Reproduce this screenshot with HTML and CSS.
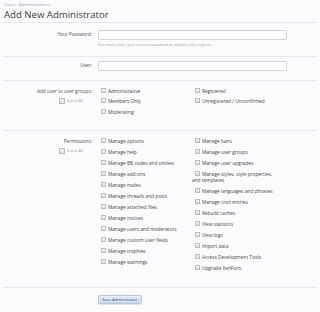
FILE: index.html
```html
<!DOCTYPE html>
<html lang="en">
<head>
<meta charset="utf-8">
<title>Add New Administrator</title>
<link rel="stylesheet" href="styles.css">
</head>
<body>
<div class="page">
  <div class="crumbs"><span>Users</span> <span class="sep">&rsaquo;</span> <span>Administrators</span> <span class="sep">&rsaquo;</span></div>
  <h1 class="title">Add New Administrator</h1>
  <form class="form">
    <div class="row row-pass">
      <div class="label label-input">Your Password:</div>
      <div class="ctrl">
        <div class="input"></div>
        <p class="hint">You must enter your current password to validate this request.</p>
      </div>
    </div>
    <div class="row row-user">
      <div class="label label-input">User:</div>
      <div class="ctrl">
        <div class="input"></div>
      </div>
    </div>
    <div class="row row-groups">
      <div class="label">
        <span>Add user to user groups:</span>
        <span class="selall"><span class="cb"></span>Select All</span>
      </div>
      <div class="cols cols-groups">
        <ul class="list">
          <li><span class="cb"></span>Administrative</li>
          <li><span class="cb"></span>Members Only</li>
          <li><span class="cb"></span>Moderating</li>
        </ul>
        <ul class="list">
          <li><span class="cb"></span>Registered</li>
          <li><span class="cb"></span>Unregistered / Unconfirmed</li>
        </ul>
      </div>
    </div>
    <div class="row row-perms">
      <div class="label">
        <span>Permissions:</span>
        <span class="selall"><span class="cb"></span>Select All</span>
      </div>
      <div class="cols">
        <ul class="list">
          <li><span class="cb"></span>Manage options</li>
          <li><span class="cb"></span>Manage help</li>
          <li><span class="cb"></span>Manage BB codes and smilies</li>
          <li><span class="cb"></span>Manage add-ons</li>
          <li><span class="cb"></span>Manage nodes</li>
          <li><span class="cb"></span>Manage threads and posts</li>
          <li><span class="cb"></span>Manage attached files</li>
          <li><span class="cb"></span>Manage notices</li>
          <li><span class="cb"></span>Manage users and moderators</li>
          <li><span class="cb"></span>Manage custom user fields</li>
          <li><span class="cb"></span>Manage trophies</li>
          <li><span class="cb"></span>Manage warnings</li>
        </ul>
        <ul class="list">
          <li><span class="cb"></span>Manage bans</li>
          <li><span class="cb"></span>Manage user groups</li>
          <li><span class="cb"></span>Manage user upgrades</li>
          <li><span class="cb"></span>Manage styles, style properties,<br>and templates</li>
          <li><span class="cb"></span>Manage languages and phrases</li>
          <li><span class="cb"></span>Manage cron entries</li>
          <li><span class="cb"></span>Rebuild caches</li>
          <li><span class="cb"></span>View statistics</li>
          <li><span class="cb"></span>View logs</li>
          <li><span class="cb"></span>Import data</li>
          <li><span class="cb"></span>Access Development Tools</li>
          <li><span class="cb"></span>Upgrade XenForo</li>
        </ul>
      </div>
    </div>
    <div class="row row-submit">
      <div class="label"></div>
      <div class="ctrl">
        <button type="button" class="button">Save Administrator</button>
      </div>
    </div>
  </form>
</div>
</body>
</html>
```

FILE: styles.css
```css
html, body {
  margin: 0;
  padding: 0;
  background: #fbfbfd;
}
body {
  font-family: "Open Sans", "Liberation Sans", sans-serif;
  color: #474747;
}
.page {
  padding: 0 3px;
}
.crumbs {
  margin-top: 0.5px;
  padding-left: 1px;
  font-size: 4.3px;
  line-height: 6px;
  color: #8d9bb0;
}
.title {
  margin: 2.5px 0 0 1px;
  font-size: 9.6px;
  line-height: 12px;
  font-weight: normal;
  color: #3b3b3b;
  height: 13px;
}
.form {
  margin: 0;
}
.row {
  display: grid;
  grid-template-columns: 89px 189px;
  column-gap: 6px;
  border-top: 1px solid #e6e9ef;
}
.row-pass { padding: 7px 0 8.5px; }
.row-user { padding: 4px 0 9px; }
.row-groups { padding: 7px 0 15px; }
.row-perms { padding: 7px 0 16.5px; }
.row-submit { padding: 6.5px 0 10px; }
.label {
  display: flex;
  flex-direction: column;
  align-items: flex-end;
  gap: 4.5px;
  font-size: 4.8px;
  line-height: 6px;
  color: #505050;
  text-align: right;
}
.label-input {
  line-height: 9px;
}
.input {
  width: 187px;
  height: 8px;
  background: #fff;
  border: 0.6px solid #cfd3da;
  border-radius: 1.2px;
  box-shadow: inset 0 0.5px 1px rgba(0,0,0,0.05);
}
.hint {
  margin: 2px 0 0;
  font-size: 3.9px;
  line-height: 5px;
  color: #9a9a9a;
}
.selall {
  display: flex;
  align-items: center;
  padding-right: 9px;
  font-size: 3.9px;
  color: #9a9a9a;
}
.selall .cb {
  margin-right: 2px;
}
.cols {
  display: grid;
  grid-template-columns: 94px 94px;
}
.list {
  list-style: none;
  margin: 0;
  padding: 0;
  display: flex;
  flex-direction: column;
  gap: 5px;
}
.cols-groups .list {
  gap: 4.5px;
}
.list li {
  font-size: 4.8px;
  line-height: 6px;
  white-space: nowrap;
  color: #474747;
}
.cb {
  display: inline-block;
  width: 3.4px;
  height: 3.4px;
  margin: 0 2px 0 2.5px;
  vertical-align: -0.4px;
  border: 0.6px solid #b9bcc2;
  border-radius: 0.5px;
  background: linear-gradient(#f4f4f4, #e2e2e2);
}
.selall .cb {
  margin-left: 0;
}
.button {
  display: block;
  width: 44px;
  height: 9px;
  padding: 0;
  margin: 0;
  font-family: inherit;
  font-size: 4px;
  line-height: 8px;
  color: #2d4b78;
  background: linear-gradient(#e6eef8, #cddcee);
  border: 0.6px solid #b3c6df;
  border-radius: 1.8px;
  box-shadow: 0 0.5px 1px rgba(0,0,0,0.1);
}
```
